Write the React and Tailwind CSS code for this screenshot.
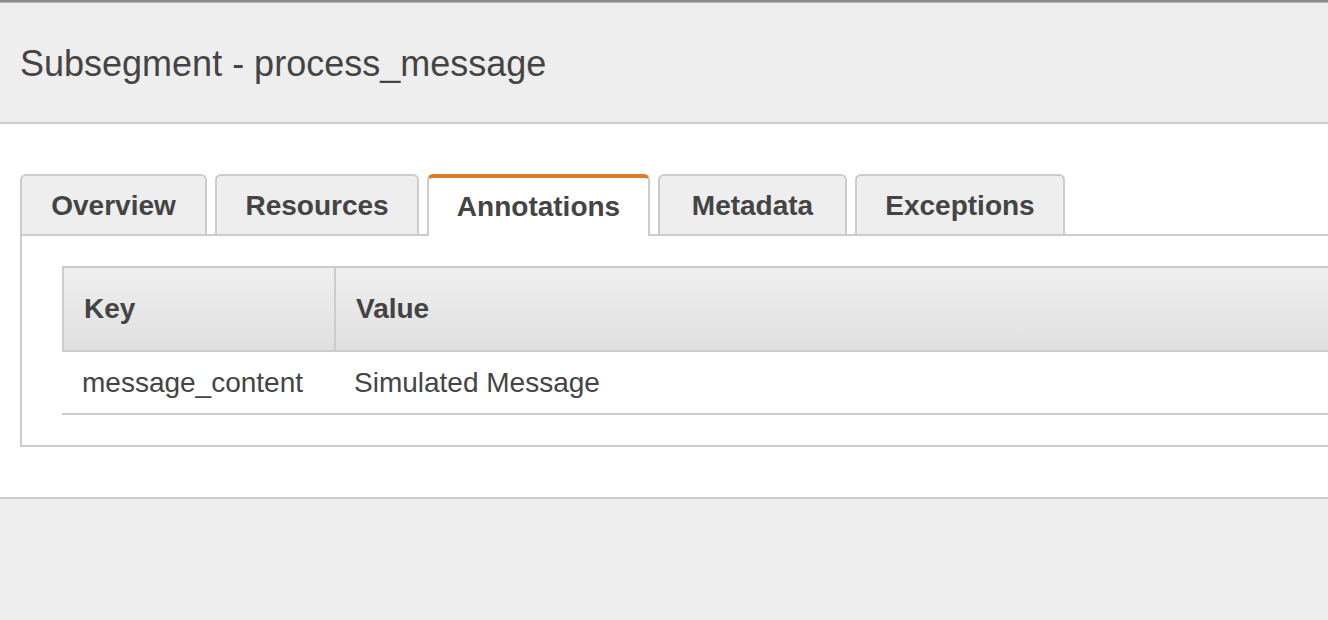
export default function App() {
  const tabs = [
    { label: "Overview", w: "w-[187px]" },
    { label: "Resources", w: "w-[204px]" },
    { label: "Annotations", w: "w-[223px]", active: true },
    { label: "Metadata", w: "w-[189px]" },
    { label: "Exceptions", w: "w-[210px]" },
  ];
  return (
    <div
      className="w-[1328px] h-[620px] overflow-hidden bg-[#eeeeee] text-[#444444] flex flex-col"
      style={{ fontFamily: '"Liberation Sans", Arial, sans-serif' }}
    >
      <div className="h-[2px] bg-[#8a8a8a] shrink-0" />
      <div className="h-[1px] bg-[#b5b5b5] shrink-0" />
      <div className="h-[121px] shrink-0 flex items-center pl-5 pt-[3px] border-b-2 border-[#cccccc]">
        <h1 className="text-[36px] leading-none">Subsegment - process_message</h1>
      </div>
      <div className="bg-white shrink-0 h-[375px] border-b-2 border-[#cccccc] pt-[50px]">
        <div className="flex gap-2 pl-5 items-end relative z-10">
          {tabs.map((t) =>
            t.active ? (
              <div
                key={t.label}
                className={`${t.w} h-[62px] -mb-[2px] bg-white border-2 border-b-0 border-[#cccccc] border-t-4 border-t-[#dd7b2c] rounded-t-md flex items-center justify-center text-[28px] font-bold pb-[1px]`}
              >
                {t.label}
              </div>
            ) : (
              <div
                key={t.label}
                className={`${t.w} h-[60px] bg-[#eeeeee] border-2 border-b-0 border-[#cccccc] rounded-t-md flex items-center justify-center text-[28px] font-bold pt-[2px]`}
              >
                {t.label}
              </div>
            )
          )}
        </div>
        <div className="ml-5 w-[1400px] h-[213px] border-2 border-[#cccccc] pt-[30px] pl-10">
          <div className="w-[1300px]">
            <div className="flex h-[86px] border-2 border-r-0 border-[#cccccc] bg-gradient-to-b from-[#efefef] to-[#e0e0e0] text-[28px] font-bold">
              <div className="w-[272px] border-r-2 border-[#cccccc] flex items-center pl-5">Key</div>
              <div className="flex-1 flex items-center pl-5">Value</div>
            </div>
            <div className="flex h-[63px] border-b-2 border-[#cccccc] text-[28px] items-center">
              <div className="w-[272px] pl-5">message_content</div>
              <div className="flex-1 pl-5">Simulated Message</div>
            </div>
          </div>
        </div>
      </div>
      <div className="flex-1" />
    </div>
  );
}
